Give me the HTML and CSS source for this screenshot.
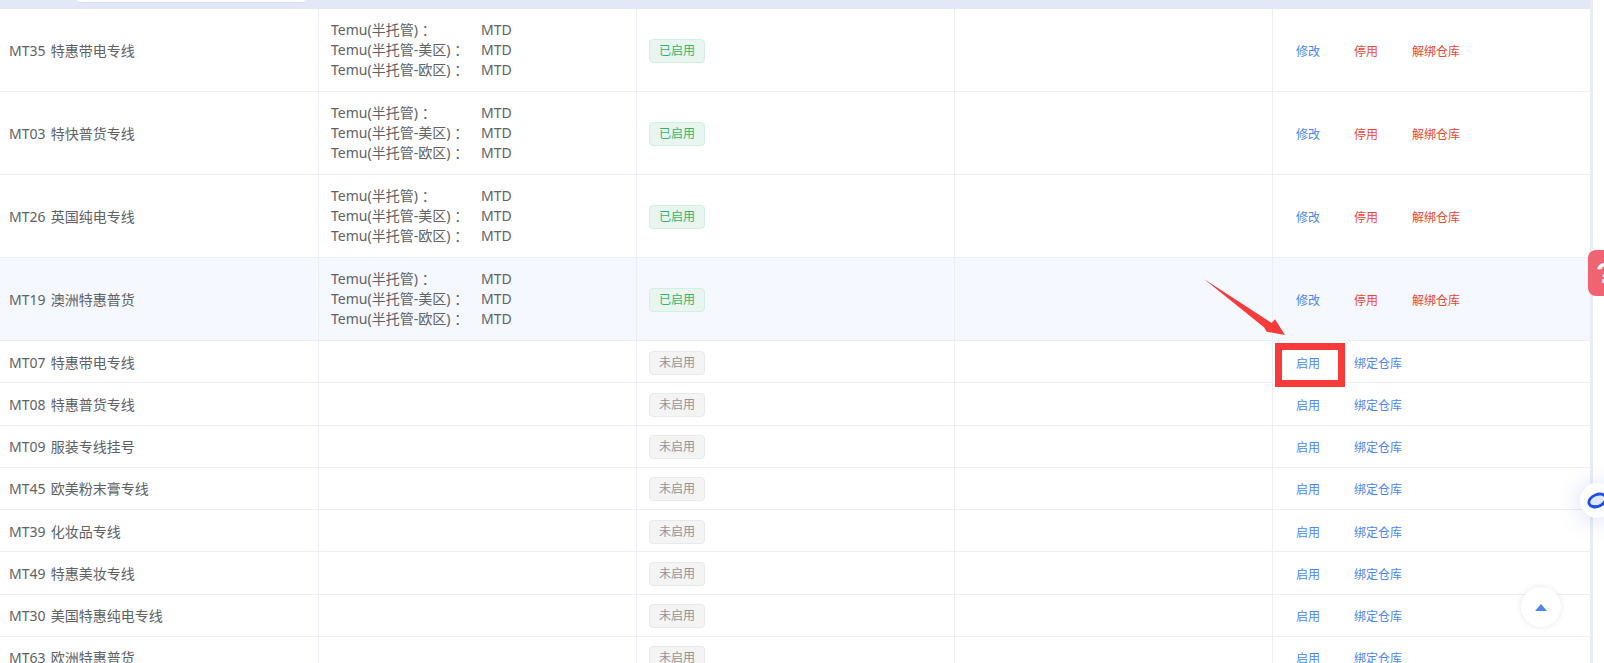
FILE: index.html
```html
<!DOCTYPE html>
<html lang="zh">
<head>
<meta charset="utf-8">
<title>物流渠道</title>
<link rel="stylesheet" href="styles.css">
</head>
<body>
<div class="page">
  <div class="main">
    <div class="thead"><div class="search"></div></div>
    <div class="tbl">
      <div class="row tall">
        <div class="cell c1">MT35 特惠带电专线</div>
        <div class="cell c2"><div class="map"><span>Temu(半托管)<i class="colon">：</i></span><span>MTD</span><span>Temu(半托管-美区)<i class="colon">：</i></span><span>MTD</span><span>Temu(半托管-欧区)<i class="colon">：</i></span><span>MTD</span></div></div>
        <div class="cell c3"><span class="tag on">已启用</span></div>
        <div class="cell c4"></div>
        <div class="cell c5"><a class="act blue">修改</a><a class="act red">停用</a><a class="act red">解绑仓库</a></div>
      </div>
      <div class="row tall">
        <div class="cell c1">MT03 特快普货专线</div>
        <div class="cell c2"><div class="map"><span>Temu(半托管)<i class="colon">：</i></span><span>MTD</span><span>Temu(半托管-美区)<i class="colon">：</i></span><span>MTD</span><span>Temu(半托管-欧区)<i class="colon">：</i></span><span>MTD</span></div></div>
        <div class="cell c3"><span class="tag on">已启用</span></div>
        <div class="cell c4"></div>
        <div class="cell c5"><a class="act blue">修改</a><a class="act red">停用</a><a class="act red">解绑仓库</a></div>
      </div>
      <div class="row tall">
        <div class="cell c1">MT26 英国纯电专线</div>
        <div class="cell c2"><div class="map"><span>Temu(半托管)<i class="colon">：</i></span><span>MTD</span><span>Temu(半托管-美区)<i class="colon">：</i></span><span>MTD</span><span>Temu(半托管-欧区)<i class="colon">：</i></span><span>MTD</span></div></div>
        <div class="cell c3"><span class="tag on">已启用</span></div>
        <div class="cell c4"></div>
        <div class="cell c5"><a class="act blue">修改</a><a class="act red">停用</a><a class="act red">解绑仓库</a></div>
      </div>
      <div class="row tall hover">
        <div class="cell c1">MT19 澳洲特惠普货</div>
        <div class="cell c2"><div class="map"><span>Temu(半托管)<i class="colon">：</i></span><span>MTD</span><span>Temu(半托管-美区)<i class="colon">：</i></span><span>MTD</span><span>Temu(半托管-欧区)<i class="colon">：</i></span><span>MTD</span></div></div>
        <div class="cell c3"><span class="tag on">已启用</span></div>
        <div class="cell c4"></div>
        <div class="cell c5"><a class="act blue">修改</a><a class="act red">停用</a><a class="act red">解绑仓库</a></div>
      </div>
      <div class="row">
        <div class="cell c1">MT07 特惠带电专线</div><div class="cell c2"></div>
        <div class="cell c3"><span class="tag off">未启用</span></div><div class="cell c4"></div>
        <div class="cell c5"><a class="act blue">启用</a><a class="act blue">绑定仓库</a></div>
      </div>
      <div class="row">
        <div class="cell c1">MT08 特惠普货专线</div><div class="cell c2"></div>
        <div class="cell c3"><span class="tag off">未启用</span></div><div class="cell c4"></div>
        <div class="cell c5"><a class="act blue">启用</a><a class="act blue">绑定仓库</a></div>
      </div>
      <div class="row">
        <div class="cell c1">MT09 服装专线挂号</div><div class="cell c2"></div>
        <div class="cell c3"><span class="tag off">未启用</span></div><div class="cell c4"></div>
        <div class="cell c5"><a class="act blue">启用</a><a class="act blue">绑定仓库</a></div>
      </div>
      <div class="row">
        <div class="cell c1">MT45 欧美粉末膏专线</div><div class="cell c2"></div>
        <div class="cell c3"><span class="tag off">未启用</span></div><div class="cell c4"></div>
        <div class="cell c5"><a class="act blue">启用</a><a class="act blue">绑定仓库</a></div>
      </div>
      <div class="row">
        <div class="cell c1">MT39 化妆品专线</div><div class="cell c2"></div>
        <div class="cell c3"><span class="tag off">未启用</span></div><div class="cell c4"></div>
        <div class="cell c5"><a class="act blue">启用</a><a class="act blue">绑定仓库</a></div>
      </div>
      <div class="row">
        <div class="cell c1">MT49 特惠美妆专线</div><div class="cell c2"></div>
        <div class="cell c3"><span class="tag off">未启用</span></div><div class="cell c4"></div>
        <div class="cell c5"><a class="act blue">启用</a><a class="act blue">绑定仓库</a></div>
      </div>
      <div class="row">
        <div class="cell c1">MT30 美国特惠纯电专线</div><div class="cell c2"></div>
        <div class="cell c3"><span class="tag off">未启用</span></div><div class="cell c4"></div>
        <div class="cell c5"><a class="act blue">启用</a><a class="act blue">绑定仓库</a></div>
      </div>
      <div class="row">
        <div class="cell c1">MT63 欧洲特惠普货</div><div class="cell c2"></div>
        <div class="cell c3"><span class="tag off">未启用</span></div><div class="cell c4"></div>
        <div class="cell c5"><a class="act blue">启用</a><a class="act blue">绑定仓库</a></div>
      </div>
    </div>
  </div>
  <div class="gutter"></div>
</div>
<div class="highlight"></div>
<svg class="arrow" width="83" height="58" viewBox="0 0 83 58"><path d="M0 0 L67.7 44 L71 40.3 L81 56 L62.7 52.7 L60 48.3 Z" fill="#f73b3b"/></svg>
<div class="help">?</div>
<div class="chat"><svg class="chat-icon" width="22" height="20" viewBox="0 0 22 20"><ellipse cx="10.5" cy="9.5" rx="9" ry="6" transform="rotate(-22 10.5 9.5)" fill="#dfe8fb" stroke="#1f4fe8" stroke-width="2.8"/><path d="M5 14.5c5 1.5 10-.5 13-5" fill="none" stroke="#1f4fe8" stroke-width="1.6"/></svg></div>
<div class="totop"><span class="tri"></span></div>
</body>
</html>
```
FILE: styles.css
```css
html, body { margin: 0; padding: 0; height: 100%; overflow: hidden; background: #fff; }
body { font-family: "Noto Sans", "Noto Sans CJK SC", sans-serif; font-size: 14px; color: #606266; }
.page { display: flex; height: 663px; overflow: hidden; }
.main { width: 1590px; flex: none; }
.gutter { width: 3px; background: #e9edf6; flex: none; }
.thead { height: 9px; background: #e2e8f8; display: flex; }
.search { width: 228px; height: 2px; margin-left: 77px; background: #fff; border-radius: 0 0 3px 3px; box-shadow: 0 1px 0 #d9dde8; }
.row { display: grid; grid-template-columns: 319px 318px 318px 318px 317px; height: 41.27px; border-bottom: 1px solid #ebeef5; background: #fff; }
.row.tall { height: 82px; }
.row.hover { background: #f5f8fe; }
.cell { display: flex; align-items: center; padding: 0 9px; border-right: 1px solid #ebeef5; box-sizing: border-box; min-width: 0; white-space: nowrap; }
.c1 { word-spacing: 1.5px; }
.c3 { padding: 2px 0 0 12px; }
.c5 { border-right: 0; padding: 2px 0 0 23px; font-size: 12px; }
.map { display: grid; grid-template-columns: 150px auto; padding-left: 3px; line-height: 20px; }
.colon { font-style: normal; margin-left: 4px; }
.tag { display: block; width: 56px; height: 24px; line-height: 22px; box-sizing: border-box; text-align: center; font-size: 12px; border-radius: 4px; border: 1px solid; }
.tag.on { color: #2fb56e; background: #e8f6ef; border-color: #d3efe0; }
.tag.off { color: #909399; background: #f4f4f5; border-color: #e9e9eb; }
.act { display: block; margin-right: 34px; }
.blue { color: #4c87f0; }
.red { color: #f0452f; }
.highlight { position: absolute; left: 1275px; top: 343px; width: 70px; height: 44px; box-sizing: border-box; border: 7px solid #f93a3a; }
.arrow { position: absolute; left: 1204px; top: 279px; }
.help { position: absolute; left: 1588px; top: 250px; width: 30px; height: 46px; border-radius: 8px; background: #f06373; color: #fff; font: bold 30px/46px "Liberation Sans", sans-serif; padding-left: 8px; box-sizing: border-box; }
.chat { position: absolute; left: 1580px; top: 483px; width: 35px; height: 35px; border-radius: 50%; background: #fff; box-shadow: 0 2px 24px rgba(70,100,230,.22); display: flex; align-items: center; padding-left: 7px; box-sizing: border-box; }
.chat-icon { flex: none; }
.totop { position: absolute; left: 1521px; top: 587px; width: 40px; height: 40px; border-radius: 50%; background: #fff; box-shadow: 0 0 6px rgba(0,0,0,.1); display: flex; align-items: center; justify-content: center; }
.tri { width: 0; height: 0; border-left: 6px solid transparent; border-right: 6px solid transparent; border-bottom: 7px solid #4c87f0; }
```
